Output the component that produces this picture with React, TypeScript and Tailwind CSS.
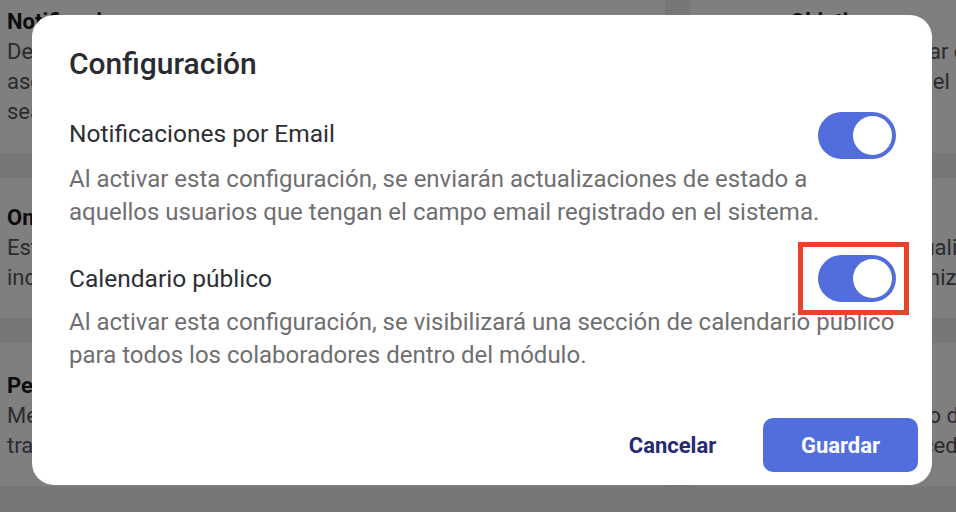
import React from "react";

function Toggle({ marked }: { marked?: boolean }) {
  return (
    <div className="relative shrink-0">
      <div className="w-[78px] h-[47px] rounded-full bg-[#526ddc] flex items-center justify-end pr-[4px]">
        <div className="w-[39px] h-[39px] rounded-full bg-white" />
      </div>
      {marked && (
        <div className="absolute -left-[20px] -top-[13px] -right-[13px] -bottom-[13px] border-[5px] border-[#e8432b]" />
      )}
    </div>
  );
}

function LeftCard({
  title,
  lines,
  className,
}: {
  title: string;
  lines: string[];
  className: string;
}) {
  return (
    <div className={`bg-white pl-[7px] overflow-hidden ${className}`}>
      <div className="text-[22px] leading-[30px] font-bold text-[#1b1b1f] whitespace-nowrap">{title}</div>
      {lines.map((l, i) => (
        <div key={i} className="text-[22px] leading-[30px] text-[#56575c] whitespace-nowrap">
          {l}
        </div>
      ))}
    </div>
  );
}

function RightCard({
  title,
  lines,
  className,
}: {
  title?: string;
  lines: string[];
  className: string;
}) {
  return (
    <div className={`bg-white pl-[100px] overflow-hidden ${className}`}>
      <div className="text-[22px] leading-[30px] font-bold text-[#1b1b1f] whitespace-nowrap">{title ?? "\u00a0"}</div>
      {lines.map((l, i) => (
        <div key={i} className="text-[22px] leading-[30px] text-[#56575c] whitespace-nowrap">
          {l}
        </div>
      ))}
    </div>
  );
}

export default function App() {
  return (
    <div
      className="relative w-[956px] h-[512px] overflow-hidden bg-[#eceef2]"
      style={{ fontFamily: "Roboto, 'Noto Sans', sans-serif" }}
    >
      <div className="grid grid-cols-[665px_300px] grid-rows-[153px_140px_143px] gap-x-[25px] gap-y-[25px]">
        <LeftCard
          className="pt-[7px]"
          title="Notificaciones"
          lines={[
            "Define las alertas que recibirán los usuarios",
            "asociados a cada proceso, para que todos",
            "sean informados oportunamente.",
          ]}
        />
        <RightCard
          className="pt-[7px]"
          title="Objetivos"
          lines={["Permite vincular objetivos", "a cada equipo el control"]}
        />
        <LeftCard
          className="pt-[25px]"
          title="Onboarding"
          lines={["Establece los pasos de bienvenida", "individuales para cada colaborador."]}
        />
        <RightCard
          className="pt-[25px]"
          lines={["Registra y actualiza", "de forma organizada"]}
        />
        <LeftCard
          className="pt-[28px]"
          title="Permisos"
          lines={["Mediante esta sección podrás administrar", "trabajos y accesos de cada perfil."]}
        />
        <RightCard
          className="pt-[28px]"
          lines={["Consulta el uso de", "según los procedimientos"]}
        />
      </div>

      <div className="fixed inset-0 bg-black/50">
        <div className="absolute left-[32px] top-[15px] w-[900px] h-[470px] rounded-[22px] bg-white flex flex-col">
          <div className="pl-[37px] pr-[35px] pt-[31px]">
            <h2 className="text-[30px] leading-[36px] font-medium text-[#2a2b30]">Configuración</h2>

            <div className="mt-[30px]">
              <div className="flex items-center justify-between h-[47px] pr-[1px]">
                <span className="text-[24.5px] leading-[30px] text-[#2e2f34] -mt-[3px]">Notificaciones por Email</span>
                <Toggle />
              </div>
              <p className="mt-[4px] text-[24px] leading-[33px] text-[#6f6f72]">
                Al activar esta configuración, se enviarán actualizaciones de estado a aquellos usuarios que
                tengan el campo email registrado en el sistema.
              </p>
            </div>

            <div className="mt-[26px]">
              <div className="flex items-center justify-between h-[47px] pr-[1px]">
                <span className="text-[24.5px] leading-[30px] text-[#2e2f34]">Calendario público</span>
                <Toggle marked />
              </div>
              <p className="mt-[4px] text-[24px] leading-[33px] text-[#6f6f72]">
                Al activar esta configuración, se visibilizará una sección de calendario público para todos
                los colaboradores dentro del módulo.
              </p>
            </div>
          </div>

          <div className="mt-auto flex justify-end gap-[13px] pr-[14px] pb-[13px]">
            <button className="w-[155px] h-[54px] text-[22px] font-bold text-[#252a75]">Cancelar</button>
            <button className="w-[155px] h-[54px] rounded-[10px] bg-[#526ddc] text-[22px] font-bold text-white">
              Guardar
            </button>
          </div>
        </div>
      </div>
    </div>
  );
}
